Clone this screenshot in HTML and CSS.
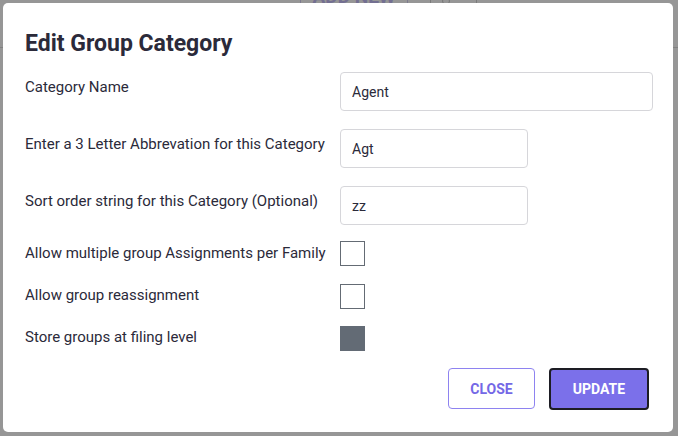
FILE: index.html
```html
<!DOCTYPE html>
<html>
<head>
<meta charset="utf-8">
<link rel="stylesheet" href="styles.css">
</head>
<body>
<div class="page">
  <div class="page-bar">
    <span class="page-btn">ADD NEW</span>
    <span class="page-sep"></span>
    <span class="page-dot"></span>
    <span class="page-sep page-sep2"></span>
  </div>
</div>
<div class="overlay">
  <div class="modal">
    <h1 class="modal-title">Edit Group Category</h1>
    <div class="form">
      <label class="label label-input">Category Name</label>
      <div class="field"><input class="input input-wide" type="text" value="Agent"></div>

      <label class="label label-input">Enter a 3 Letter Abbrevation for this Category</label>
      <div class="field"><input class="input input-short" type="text" value="Agt"></div>

      <label class="label label-input">Sort order string for this Category (Optional)</label>
      <div class="field"><input class="input input-short" type="text" value="zz"></div>

      <label class="label label-check">Allow multiple group Assignments per Family</label>
      <div class="field field-check"><span class="check"></span></div>

      <label class="label label-check">Allow group reassignment</label>
      <div class="field field-check"><span class="check"></span></div>

      <label class="label label-check">Store groups at filing level</label>
      <div class="field field-check"><span class="check check-disabled"></span></div>
    </div>
    <div class="footer">
      <button class="btn btn-outline">CLOSE</button>
      <button class="btn btn-primary">UPDATE</button>
    </div>
  </div>
</div>
</body>
</html>
```

FILE: styles.css
```css
* { box-sizing: border-box; }
html, body {
  margin: 0;
  padding: 0;
  width: 678px;
  height: 436px;
  overflow: hidden;
  font-family: Roboto, "Liberation Sans", Arial, sans-serif;
}
body { background: #ffffff; }

.page { width: 678px; height: 436px; }
.page-bar {
  height: 48px;
  border-bottom: 1px solid #dcdcdc;
  display: flex;
  align-items: flex-start;
  padding-left: 300px;
}
.page-btn {
  margin-top: -13px;
  width: 108px;
  height: 26px;
  border: 1px solid #d4d0f2;
  border-top: none;
  color: #c3bdf6;
  font-weight: 700;
  font-size: 19px;
  line-height: 20px;
  text-align: center;
}
.page-sep { width: 1px; height: 14px; background: #d0d0d0; margin-left: 22px; }
.page-dot {
  width: 8px;
  height: 8px;
  border: 1px solid #c8c8c8;
  border-radius: 50%;
  margin-left: 11px;
  margin-top: -3px;
}
.page-sep2 { margin-left: 26px; height: 18px; }

.overlay {
  position: fixed;
  inset: 0;
  background: rgba(0, 0, 0, 0.41);
  padding: 3px 5px 4px 3px;
}
.modal {
  background: #ffffff;
  border-radius: 5px;
  height: 429px;
  padding: 27px 20px 0 22px;
  display: flex;
  flex-direction: column;
  color: #2b2a3a;
}
.modal-title {
  margin: 0;
  font-size: 23px;
  line-height: 27px;
  font-weight: 700;
  color: #2b2a3a;
}
.form {
  margin-top: 15px;
  display: grid;
  grid-template-columns: 315px 1fr;
  grid-auto-rows: auto;
  row-gap: 18px;
}
.label {
  font-size: 15px;
  line-height: 20px;
  color: #2b2a3a;
}
.label-input { padding-top: 5px; }
.label-check { align-self: center; padding-bottom: 4px; }
.field { display: flex; }
.input {
  height: 39px;
  border: 1px solid #d6d6da;
  border-radius: 4px;
  padding: 0 11px;
  font-family: Roboto, "Liberation Sans", Arial, sans-serif;
  font-size: 14px;
  color: #2b2a3a;
  background: #fff;
  outline: none;
}
.input-wide { width: 313px; }
.input-short { width: 188px; }
.field-check { align-items: center; }
.form .field-check:nth-child(8) { margin-top: -3px; }
.check {
  width: 25px;
  height: 25px;
  border: 1px solid #646b74;
  background: #fff;
  display: block;
}
.check-disabled { background: #636b75; border-color: #636b75; }
.form > :nth-child(n+9) { margin-top: -1px; }

.footer {
  margin-top: auto;
  margin-bottom: 22px;
  margin-right: 4px;
  display: flex;
  justify-content: flex-end;
  gap: 14px;
}
.btn {
  height: 42px;
  font-family: Roboto, "Liberation Sans", Arial, sans-serif;
  font-size: 14px;
  font-weight: 700;
  border-radius: 4px;
  cursor: pointer;
}
.btn-outline {
  width: 87px;
  background: #fff;
  border: 1px solid #8e83f0;
  color: #7468e6;
  height: 41px;
}
.btn-primary {
  width: 100px;
  background: #7b70ea;
  border: 2px solid #1d1d24;
  color: #ffffff;
}
```
